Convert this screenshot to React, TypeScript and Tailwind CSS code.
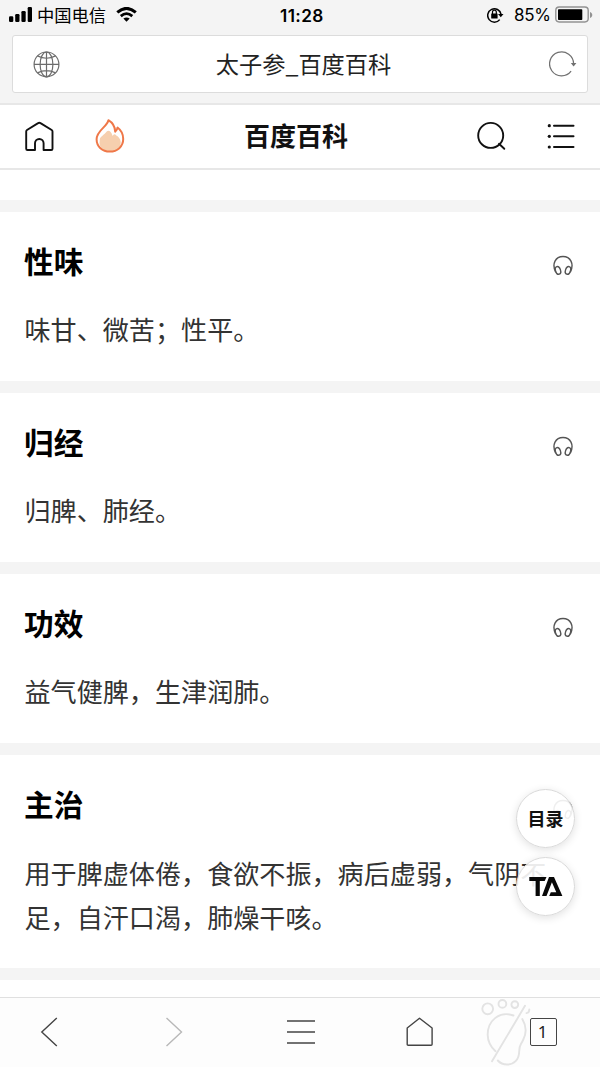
import React from "react";

const sans = "font-['Liberation_Sans','Noto_Sans_CJK_SC',sans-serif]";
const cjk = "font-['Noto_Sans_CJK_SC',sans-serif]";

const sections = [
  { title: "性味", lines: ["味甘、微苦；性平。"] },
  { title: "归经", lines: ["归脾、肺经。"] },
  { title: "功效", lines: ["益气健脾，生津润肺。"] },
  { title: "主治", lines: ["用于脾虚体倦，食欲不振，病后虚弱，气阴不", "足，自汗口渴，肺燥干咳。"] },
];

function StatusBar() {
  return (
    <div className="relative flex h-[30px] items-center justify-between pl-[9px] pr-[7px] text-black">
      <div className="flex items-center">
        <svg width="24" height="16" viewBox="0 0 24 16">
          <rect x="0" y="9.2" width="4.3" height="5.8" rx="1.2" />
          <rect x="6.2" y="7" width="4.3" height="8" rx="1.2" />
          <rect x="12.4" y="4" width="4.3" height="11" rx="1.2" />
          <rect x="18.7" y="0" width="4.3" height="15" rx="1.2" />
        </svg>
        <span className={`ml-[4px] text-[17.3px] leading-[30px] ${cjk}`}>中国电信</span>
        <svg className="ml-[10px]" width="22" height="16" viewBox="0 0 22 16" fill="none" stroke="#000">
          <path d="M1.3 5.4Q10.5-2.6 19.8 5.4" strokeWidth="3" />
          <path d="M4.8 9.1Q10.5 4.2 16.3 9.1" strokeWidth="2.8" />
          <path d="M7.4 11.6Q10.5 9.3 13.7 11.6L10.5 14.8Z" fill="#000" stroke="none" />
        </svg>
      </div>
      <span className="absolute left-[280px] top-0 whitespace-nowrap font-['Inter',sans-serif] text-[17.2px] font-semibold leading-[31px] tracking-[0.4px]">11:28</span>
      <div className="flex items-center">
        <svg width="17" height="16" viewBox="0 0 17 16" fill="none" stroke="#000" strokeWidth="1.5">
          <path d="M12.7 12.6A6.7 6.7 0 1 1 14 7.2" />
          <path d="M11 6.9h5.5l-2.7 3.4Z" fill="#000" stroke="none" />
          <rect x="4.2" y="6.5" width="6.4" height="5" rx=".5" fill="#000" stroke="none" />
          <path d="M5.5 7V5a1.9 1.9 0 0 1 3.8 0v2" strokeWidth="1.2" />
        </svg>
        <span className="ml-[10px] w-[36px] whitespace-nowrap font-['Inter',sans-serif] text-[17px] leading-[30px] tracking-[-0.3px]">85%</span>
        <svg className="ml-[5px]" width="38" height="18" viewBox="0 0 38 18">
          <rect x=".8" y="1" width="32.4" height="15" rx="3.4" fill="none" stroke="#929292" strokeWidth="1.4" />
          <rect x="3" y="3.2" width="24.3" height="10.8" rx=".8" />
          <path d="M35 6c3 1 3 5 0 6Z" fill="#929292" />
        </svg>
      </div>
    </div>
  );
}

function AddressBar() {
  return (
    <div className="mx-[12px] mt-[5px] flex h-[58px] items-center justify-between rounded-[3px] border border-[#dcdcdc] bg-white pl-[20px] pr-[10px]">
      <svg width="28" height="28" viewBox="0 0 28 28" fill="none" stroke="#6c6c6c" strokeWidth="1.2">
        <circle cx="13.5" cy="14.4" r="12.4" />
        <ellipse cx="13.5" cy="14.4" rx="6.4" ry="12.4" />
        <path d="M13.5 2v24.8M1 14.4h25M4.5 5.9Q13.5 10.6 22.5 5.9M4.5 22.9Q13.5 18.2 22.5 22.9" />
      </svg>
      <span className={`-ml-[3px] whitespace-nowrap pb-px text-[23.2px] leading-[53px] text-[#222] ${cjk}`}>太子参_百度百科</span>
      <svg width="28" height="28" viewBox="0 0 28 28" fill="none" stroke="#707070" strokeWidth="1.25">
        <path d="M22.1 21.2A12 12 0 1 1 24.6 13.8" />
        <path d="M21.8 13h5.6l-2.8 3.5Z" fill="#707070" stroke="none" />
      </svg>
    </div>
  );
}

function SiteHeader() {
  return (
    <header className="relative mt-[10px] flex h-[67px] items-center justify-between border-y-2 border-[#e7e7e7] bg-white pb-[2px] pl-[24px] pr-[25px]">
      <div className="flex items-center gap-[39px]">
        <svg width="31" height="34" viewBox="0 0 31 34" fill="none" stroke="#111" strokeWidth="1.9" strokeLinejoin="round">
          <path d="M3.5 31H11V24.3a4.3 4.3 0 0 1 8.6 0V31H27.2q1.3 0 1.3-1.3V12.5q0-1-.8-1.5L16.5 4.1q-1.2-.8-2.4 0L3 11q-.8.5-.8 1.5v17.2Q2.2 31 3.5 31Z" />
        </svg>
        <svg width="32" height="36" viewBox="0 0 32 36">
          <path d="M5.7 22.5c0-3.7 3.1-4.5 5.7-7.4q3.2-4.6 6 0l1.3 2.8q1.3-3 3.6-.4l1.6 1c2.5 2.5 3.7 5.6 2.2 9-2 4.4-5.4 6.3-10.2 6.3-6.6 0-11.5-5-10.2-11.3Z" fill="#f6cfae" />
          <path d="M14.4 2.2C13.9 8.3 2.6 12.3 2.6 21.3c0 7.3 5.7 12.3 13.2 12.3s13.4-5 13.4-12.5c0-5.1-2.5-9.3-5.7-11.6-.2 1.8-1 3.3-2.3 4.2-.2-5.2-2.6-9-6.8-11.5Z" fill="none" stroke="#ef7849" strokeWidth="2" strokeLinejoin="round" />
        </svg>
      </div>
      <h1 className={`absolute left-[244px] top-0 text-[26px] font-bold leading-[60px] text-[#111] ${cjk}`}>百度百科</h1>
      <div className="flex items-center gap-[41px]">
        <svg width="30" height="30" viewBox="0 0 30 30" fill="none" stroke="#111" strokeWidth="1.9">
          <circle cx="14.7" cy="14.4" r="12.5" />
          <path d="m23 22.8 5.3 5" strokeLinecap="round" />
        </svg>
        <svg width="28" height="28" viewBox="0 0 28 28" fill="#111">
          <circle cx="2.3" cy="3.7" r="1.6" /><circle cx="2.3" cy="14.3" r="1.6" /><circle cx="2.3" cy="25" r="1.6" />
          <path d="M7 3.7h19.5M7 14.3h19.5M7 25h19.5" stroke="#111" strokeWidth="2" strokeLinecap="round" />
        </svg>
      </div>
    </header>
  );
}

function Headphones() {
  return (
    <svg className="mt-[7px]" width="22" height="22" viewBox="0 0 22 22" fill="none" stroke="#555" strokeWidth="1.4" strokeLinecap="round">
      <path d="M3.5 16.8C-.3 8.7 3.5 1.5 11 1.5s11.3 7.2 7.5 15.3" />
      <ellipse cx="6" cy="15.4" rx="2.5" ry="4" transform="rotate(-18 6 15.4)" />
      <ellipse cx="16" cy="15.4" rx="2.5" ry="4" transform="rotate(18 16 15.4)" />
    </svg>
  );
}

function FloatingButtons() {
  const round = "flex h-[59px] w-[59px] items-center justify-center rounded-full border border-[#d9d9d9] bg-white/90 shadow-[0_2px_8px_rgba(0,0,0,0.12)]";
  return (
    <div className="absolute left-[516px] top-[789px] flex flex-col gap-[9px]">
      <button className={`${round} pb-px text-[18px] font-bold leading-[26px] text-[#111] ${cjk}`}>目录</button>
      <button className={round} aria-label="TA">
        <svg width="34" height="22" viewBox="0 0 34 22" fill="#080808">
          <path d="M.3 1H17.5L15.7 5H10.8V20H6.6V5H.3Z" />
          <path fillRule="evenodd" d="M20 1H25L33.4 20H20.2L21.8 16.3H27.3L22.9 6.2L17.5 20H13Z" />
        </svg>
      </button>
    </div>
  );
}

function Toolbar() {
  return (
    <nav className="absolute inset-x-0 top-[997px] flex h-[70px] items-center justify-between border-t border-[#e0e0e0] bg-[#fdfdfd] pb-[2px] pl-[40px] pr-[43px]">
      <svg width="18" height="30" viewBox="0 0 18 30" fill="none" stroke="#444" strokeWidth="1.4"><path d="m16.8 1-15 14 15 14" /></svg>
      <svg className="ml-[65px]" width="18" height="30" viewBox="0 0 18 30" fill="none" stroke="#b8b8b8" strokeWidth="1.4"><path d="m1.5 1 15 14-15 14" /></svg>
      <svg className="ml-[61px]" width="30" height="28" viewBox="0 0 30 28" stroke="#444" strokeWidth="1.4"><path d="M1 3h28M1 14h28M1 25h28" /></svg>
      <svg className="ml-[49px]" width="28" height="30" viewBox="0 0 28 30" fill="none" stroke="#444" strokeWidth="1.4" strokeLinejoin="round"><path d="M1.2 11 13.5 1.2 26.1 11v16.2q0 1-1 1H2.2q-1 0-1-1Z" /></svg>
      <div className="ml-[54px] flex h-[28px] w-[27px] items-center justify-center rounded-[2px] border-[1.5px] border-[#444] pr-[2px] font-['Noto_Sans',sans-serif] text-[17px] leading-none text-[#222]">1</div>
    </nav>
  );
}

function Footprint() {
  return (
    <svg className="pointer-events-none absolute left-[480px] top-[996px]" width="52" height="71" viewBox="0 0 52 71" fill="none" stroke="#e3e3e3" strokeWidth="1.9" strokeLinecap="round">
      <circle cx="7.7" cy="12.8" r="5.4" /><circle cx="22.4" cy="7.9" r="3.9" /><circle cx="34.8" cy="8.6" r="3.4" />
      <path d="M49.3 13.5q0 3.3-2.8 3.6" />
      <path d="M33.5 19.5C19 14.5 7.5 25 7.7 39c.1 7 3.3 12.2 7.8 16.2" />
      <path d="M42.3 23c3.8 6.3 4.3 14.3.8 21-2.5 5.3-3.9 5-3.9 11.2 0 8.7-5.5 13.3-12.2 13.3-4.1 0-7-1.5-9.2-4" />
      <path d="M45 9.8 12 65.2" />
    </svg>
  );
}

export default function App() {
  return (
    <div className={`relative h-[1067px] w-[600px] overflow-hidden bg-[#f4f4f4] ${sans}`}>
      <StatusBar />
      <AddressBar />
      <SiteHeader />
      <main>
        <div className="h-[30px] bg-white" />
        {sections.map((s) => (
          <section key={s.title} className="mt-[11.6px] bg-white px-[24px] pb-[29.8px] pt-[29.2px]">
            <div className="flex h-[44px] items-center justify-between pr-[2px]">
              <h2 className={`pb-[5px] text-[29.7px] font-bold leading-[39px] text-black ${cjk}`}>{s.title}</h2>
              <Headphones />
            </div>
            <div className="mt-[22.5px] pl-[0.5px]">
              {s.lines.map((line) => (
                <p key={line} className={`whitespace-nowrap text-[26.1px] leading-[44px] text-[#333] ${cjk}`}>{line}</p>
              ))}
            </div>
          </section>
        ))}
        <div className="mt-[11.6px] h-[90px] bg-white" />
      </main>
      <FloatingButtons />
      <Toolbar />
      <Footprint />
    </div>
  );
}
